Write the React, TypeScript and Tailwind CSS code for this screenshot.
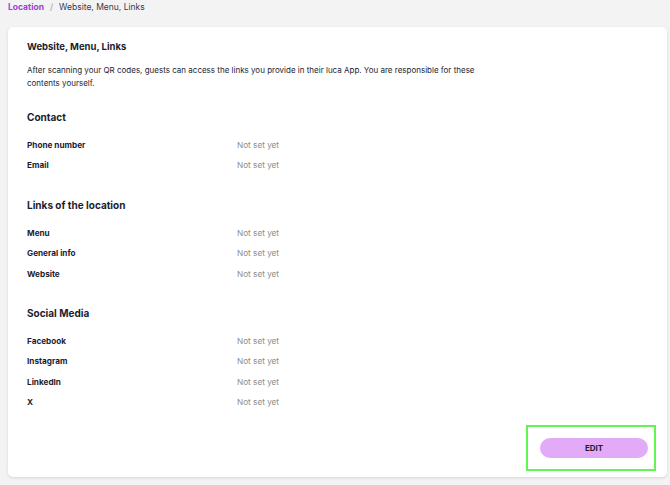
const sections = [
  { title: "Contact", rows: ["Phone number", "Email"] },
  { title: "Links of the location", rows: ["Menu", "General info", "Website"] },
  { title: "Social Media", rows: ["Facebook", "Instagram", "LinkedIn", "X"] },
];

function InfoRow({ label }: { label: string }) {
  return (
    <div className="flex h-[20.4px] items-center text-[8.2px]">
      <div className="w-[210px] font-bold text-[#1d1d2f]">{label}</div>
      <div className="text-[#8c8c8c]">Not set yet</div>
    </div>
  );
}

export default function App() {
  return (
    <div
      className="min-h-[485px] bg-[#f3f3f3] text-[#1d1d2f]"
      style={{ fontFamily: "Inter, 'Noto Sans', sans-serif" }}
    >
      <div className="flex h-[13px] items-center gap-[6px] pl-[8px] pt-[1px] text-[8.5px]">
        <span className="font-bold text-[#9b40d1]">Location</span>
        <span className="text-[#9a9a9a]">/</span>
        <span className="text-[#3a3a4a]">Website, Menu, Links</span>
      </div>

      <div className="ml-[8px] mr-[3px] mt-[14px] h-[450px] rounded-[5px] bg-white px-[19px] pt-[11px] shadow-[0_1px_3px_rgba(0,0,0,0.12)]">
        <h1 className="h-[18px] text-[9.5px] font-bold leading-[18px]">Website, Menu, Links</h1>
        <p className="mt-[8px] w-[450px] text-[8px] leading-[13px] text-[#1d1d2f]">
          After scanning your QR codes, guests can access the links you provide in their luca App. You are
          responsible for these contents yourself.
        </p>

        {sections.map((s, i) => (
          <div key={s.title} className={i === 0 ? "mt-[17px]" : "mt-[19px]"}>
            <h2 className="mb-[8px] h-[20px] text-[10px] font-bold leading-[20px]">{s.title}</h2>
            {s.rows.map((r) => (
              <InfoRow key={r} label={r} />
            ))}
          </div>
        ))}

        <div className="mt-[12px] flex justify-end">
          <div className="-mr-[8px] border-2 border-[#62f552] pb-[11px] pl-[12px] pr-[6px] pt-[6px]">
            <button className="h-[20px] w-[108px] rounded-full bg-[#e2aaf7] text-[8px] font-bold text-[#1d1d2f]">
              EDIT
            </button>
          </div>
        </div>
      </div>
    </div>
  );
}
